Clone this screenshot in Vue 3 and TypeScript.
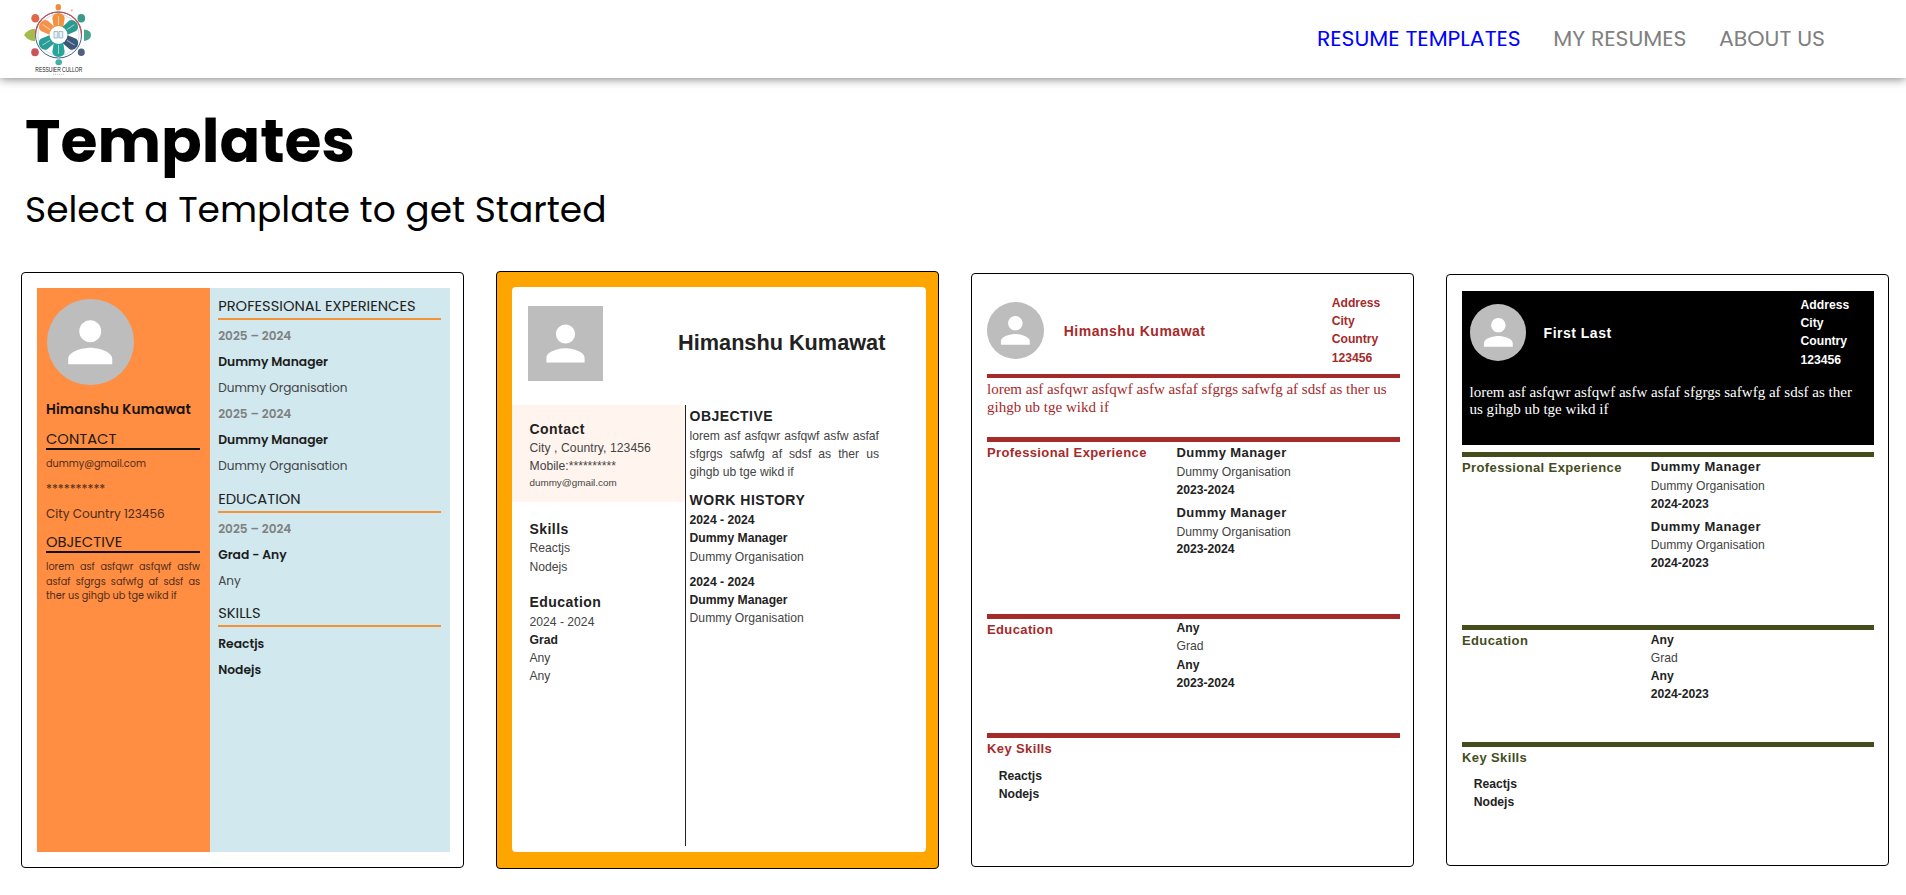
<script setup lang="ts">
interface NavItem { label: string; key: string; active: boolean }
interface Job { title: string; org: string; period: string }
interface Theme { key: string; name: string; period: string }

const navItems: NavItem[] = [
  { label: 'RESUME TEMPLATES', key: 'nav-templates', active: true },
  { label: 'MY RESUMES', key: 'nav-resumes', active: false },
  { label: 'ABOUT US', key: 'nav-about', active: false },
]
const objective = 'lorem asf asfqwr asfqwf asfw asfaf sfgrgs safwfg af sdsf as ther us gihgb ub tge wikd if'
const skills: string[] = ['Reactjs', 'Nodejs']
const address: string[] = ['Address', 'City', 'Country', '123456']
const jobs = (period: string): Job[] => [1, 2].map(() => ({ title: 'Dummy Manager', org: 'Dummy Organisation', period }))
const banded: Theme[] = [
  { key: 'crimson', name: 'Himanshu Kumawat', period: '2023-2024' },
  { key: 'olive', name: 'First Last', period: '2024-2023' },
]
const avatarBox = '-3.73 -3.73 31.46 31.46'
const personPath = 'M12 12c2.21 0 4-1.79 4-4s-1.79-4-4-4-4 1.79-4 4 1.79 4 4 4zm0 2c-2.67 0-8 1.34-8 4v2h16v-2c0-2.66-5.33-4-8-4z'
const petals: { angle: number; color: string }[] = [
  { angle: 0, color: '#f0923f' },
  { angle: 57, color: '#2b9a8f' },
  { angle: 122, color: '#3c5878' },
  { angle: 180, color: '#27a59b' },
  { angle: 238, color: '#2a9d96' },
  { angle: 303, color: '#f4934a' },
]
</script>

<template>
  <div class="page">
    <header class="topbar">
      <svg class="logo" viewBox="0 0 70 76" width="70" height="76">
        <circle cx="35.5" cy="34" r="23" fill="#fff" stroke="#3f5f80" stroke-width="1" />
        <path d="M12.500 34a23 23 0 0 1 46 0" fill="none" stroke="#c4545a" stroke-width="1.2" />
        <circle cx="35.5" cy="34" r="20.5" fill="none" stroke="#d9dde2" stroke-width="1" />
        <g v-for="p in petals" :key="p.angle" :transform="`rotate(${p.angle} 35.5 34)`">
          <path d="M31 27.500L29.300 17Q30 12.500 35.500 12Q41 12.500 41.700 17L40 27.500Z" :fill="p.color" />
          <path d="M35.500 15v9" stroke="#fff" stroke-opacity=".55" stroke-width="1" />
        </g>
        <circle cx="35.5" cy="34" r="9" fill="#fff" />
        <path d="M31 30.500h3.800v6.500h-3.800zM36 30.500h3.800v6.500h-3.800z" fill="#e6f2f4" stroke="#7fa3b0" stroke-width=".7" />
        <ellipse cx="35.3" cy="6.300" rx="2.700" ry="3.200" fill="#f08a3c" />
        <ellipse cx="12.300" cy="17.300" rx="4" ry="4.300" fill="#e2674a" />
        <ellipse cx="58.300" cy="17.300" rx="3.800" ry="4.300" fill="#3a9a8c" />
        <path d="M1 34q4-6 11-6.200v12.500Q5 40 1 34z" fill="#a3bd4c" />
        <path d="M61 28.500q7 .5 7 5.500t-7 6z" fill="#48a58d" />
        <ellipse cx="12" cy="51.300" rx="3.800" ry="4" fill="#c9545a" />
        <ellipse cx="58.300" cy="51.300" rx="3.500" ry="3.800" fill="#4c6280" />
        <ellipse cx="35.700" cy="61.300" rx="3.300" ry="3" fill="#3fb0a3" />
        <path d="M47.500 9.500l1.500-1.500 1 1.200-1.500 1.300z" fill="#f6b26b" />
        <text x="12.300" y="71" textLength="47" lengthAdjust="spacingAndGlyphs" class="logo-text">RESSUIER CULLOR</text>
        <path d="M30 73.300h12" stroke="#c4c4c4" stroke-width="1" stroke-dasharray="1.200 .8" />
      </svg>
      <nav class="nav">
        <a v-for="n in navItems" :key="n.key" :class="['nav-link', n.key, { active: n.active }]">{{ n.label }}</a>
      </nav>
    </header>

    <main>
      <h1 class="title">Templates</h1>
      <p class="subtitle">Select a Template to get Started</p>

      <div class="cards">
        <article class="card split">
          <div class="side">
            <svg class="avatar round" :viewBox="avatarBox"><path :d="personPath" /></svg>
            <p class="side-name">Himanshu Kumawat</p>
            <h3 class="side-head contact">CONTACT</h3>
            <p class="side-mail">dummy@gmail.com</p>
            <p class="side-phone">**********</p>
            <p class="side-city">City Country 123456</p>
            <h3 class="side-head objective">OBJECTIVE</h3>
            <p class="side-text">{{ objective }}</p>
          </div>
          <div class="body">
            <h3 class="body-head experiences">PROFESSIONAL EXPERIENCES</h3>
            <template v-for="i in 2" :key="i">
              <p class="row date">2025 – 2024</p>
              <p class="row strong manager">Dummy Manager</p>
              <p class="row org">Dummy Organisation</p>
            </template>
            <h3 class="body-head education">EDUCATION</h3>
            <p class="row date">2025 – 2024</p>
            <p class="row strong grad">Grad - Any</p>
            <p class="row org">Any</p>
            <h3 class="body-head">SKILLS</h3>
            <p v-for="s in skills" :key="s" class="row strong skill">{{ s }}</p>
          </div>
        </article>

        <article class="card framed">
          <div class="sheet">
            <div class="sheet-top">
              <svg class="avatar" :viewBox="avatarBox"><path :d="personPath" /></svg>
              <h2 class="sheet-name">Himanshu Kumawat</h2>
            </div>
            <div class="sheet-cols">
              <div class="sheet-left">
                <div class="contact-box">
                  <h3 class="head">Contact</h3>
                  <p class="line city">City , Country, 123456</p>
                  <p class="line phone">Mobile:**********</p>
                  <p class="line mail">dummy@gmail.com</p>
                </div>
                <div class="block">
                  <h3 class="head">Skills</h3>
                  <p v-for="s in skills" :key="s" class="line">{{ s }}</p>
                </div>
                <div class="block">
                  <h3 class="head">Education</h3>
                  <p class="line">2024 - 2024</p>
                  <p class="line b">Grad</p>
                  <p class="line">Any</p>
                  <p class="line">Any</p>
                </div>
              </div>
              <div class="sheet-right">
                <h3 class="head caps">OBJECTIVE</h3>
                <p class="line para">{{ objective }}</p>
                <h3 class="head caps history">WORK HISTORY</h3>
                <div v-for="(j, i) in jobs('2024 - 2024')" :key="i" class="history-item">
                  <p class="line b">{{ j.period }}</p>
                  <p class="line b">{{ j.title }}</p>
                  <p class="line">{{ j.org }}</p>
                </div>
              </div>
            </div>
          </div>
        </article>

        <article v-for="t in banded" :key="t.key" :class="['card', 'banded', t.key]">
          <div class="intro">
            <div class="intro-top">
              <svg class="avatar round" :viewBox="avatarBox"><path :d="personPath" /></svg>
              <h2 class="intro-name">{{ t.name }}</h2>
              <div class="address">
                <p v-for="a in address" :key="a" class="line">{{ a }}</p>
              </div>
            </div>
            <p class="summary">{{ objective }}</p>
          </div>
          <section class="band work">
            <h3 class="band-head">Professional Experience</h3>
            <div>
              <div v-for="(j, i) in jobs(t.period)" :key="i" class="job">
                <h4 class="job-title">{{ j.title }}</h4>
                <p class="line">{{ j.org }}</p>
                <p class="line b">{{ j.period }}</p>
              </div>
            </div>
          </section>
          <section class="band study">
            <h3 class="band-head">Education</h3>
            <div>
              <p class="line b">Any</p>
              <p class="line">Grad</p>
              <p class="line b">Any</p>
              <p class="line b">{{ t.period }}</p>
            </div>
          </section>
          <section class="band skills">
            <h3 class="band-head">Key Skills</h3>
            <div class="skill-list">
              <p v-for="s in skills" :key="s" class="line b">{{ s }}</p>
            </div>
          </section>
        </article>
      </div>
    </main>
  </div>
</template>

<style>
body { background: #fff; overflow: hidden; }
</style>

<style scoped>
.page { min-height: 895px; font-family: Poppins, Inter, sans-serif; color: #000; }
.page * { box-sizing: border-box; }
h1, h2, h3, h4, p { margin: 0; }

.topbar { display: flex; align-items: center; height: 78px; padding: 0 81px 0 23px; background: #fff; box-shadow: 0 0 10px 0 rgba(0, 0, 0, .6); clip-path: inset(0 0 -20px 0); }
.logo { display: block; overflow: visible; }
.logo-text { font: 8px "Liberation Sans", sans-serif; fill: #222; }
.nav { display: flex; margin-left: auto; gap: 32.500px; }
.nav-link { font-size: 22px; line-height: 30px; color: #808080; white-space: nowrap; }
.nav-link.active { color: #00f; }

.title { padding-left: 25px; margin-top: 26px; font-size: 60px; line-height: 74px; font-weight: 700; }
.subtitle { padding-left: 25px; margin-top: 7px; font-size: 36px; line-height: 50px; }

.cards { display: grid; grid-template-columns: repeat(4, 443px); gap: 32px; align-items: center; padding-left: 21px; height: 598px; margin-top: 36px; }
.card { border: 1px solid #000; border-radius: 4px; background: #fff; }
.avatar { display: block; flex: none; background: #bdbdbd; fill: #fff; }
.avatar.round { border-radius: 50%; }

.split { display: flex; height: 596px; padding: 15px 13px 15px 15px; }
.side { width: 173px; padding: 10.500px 10px 0 9px; background: #ff8d42; color: #231a14; }
.side .avatar { width: 86.500px; height: 86.500px; margin-left: 1.200px; }
.side-name { margin-top: 14.500px; font-size: 13.700px; line-height: 20px; font-weight: 600; white-space: nowrap; color: #1a1410; letter-spacing: .12px; }
.side-head { height: 20px; font-size: 14.700px; line-height: 18px; font-weight: 400; border-bottom: 2px solid #111; }
.side-head.contact { margin-top: 10.500px; }
.side-mail { margin-top: 5.500px; font-size: 9.700px; line-height: 16px; color: #4a2c1a; }
.side-phone { margin-top: 9.200px; font-size: 12.200px; line-height: 16px; color: #4a2c1a; }
.side-city { margin-top: 9.400px; font-size: 12.050px; line-height: 16px; color: #4a2c1a; white-space: nowrap; }
.side-head.objective { margin-top: 11.400px; }
.side-text { margin-top: 7px; font-size: 9.700px; line-height: 14.500px; text-align: justify; color: #4a2c1a; }

.body { flex: 1; padding: 6px 8.700px 0 8.200px; background: #d0e8ee; }
.body-head { margin: 7.500px 0 3.100px; height: 26px; font-size: 14.700px; line-height: 24px; font-weight: 400; border-bottom: 2px solid #f39237; color: #222; white-space: nowrap; }
.body-head:first-child { margin-top: 0; }
.row { font-size: 12.050px; line-height: 26px; color: #444; }
.row.date { color: #808080; font-weight: 600; }
.row.strong { color: #1c1c1c; font-weight: 600; font-size: 12.300px; }
.row.skill { padding-top: .5px; }

.framed, .banded { font-family: "Liberation Sans", Arial, sans-serif; }
.line { font-size: 12.160px; line-height: 18.200px; color: #444; white-space: nowrap; }
.line.b { font-weight: 700; color: #222; }

.framed { height: 598px; padding: 15px 12px 16px 15px; background: #ffa500; }
.sheet { display: flex; flex-direction: column; height: 100%; border-radius: 4px; background: #fff; }
.sheet-top { display: flex; align-items: center; height: 118px; padding: 0 0 6px 15.600px; }
.sheet .avatar { width: 75px; height: 75px; }
.sheet-name { margin-left: 75.500px; font-size: 21.700px; line-height: 30px; color: #222; padding-bottom: 1px; }
.sheet-cols { display: flex; height: 441px; }
.sheet-left { width: 173px; }
.sheet-right { flex: 1; border-left: 1px solid #222; padding: 1.400px 47px 0 3.600px; }
.contact-box { height: 97.300px; padding: 13.500px 0 0 17.500px; background: #fff4ee; }
.block { padding-left: 17.500px; margin-top: 16.400px; }
.head { font-size: 14px; line-height: 20px; letter-spacing: .45px; margin-bottom: .7px; color: #222; }
.city { letter-spacing: .06px; }
.phone { line-height: 18px; }
.mail { font-size: 9.850px; line-height: 16.400px; }
.line.para { white-space: normal; text-align: justify; }
.history { margin-top: 8.800px; letter-spacing: .5px; }
.history-item + .history-item { margin-top: 7.200px; }

.banded { padding: 0 13px 0 15px; }
.crimson { --accent: #a52a2a; height: 594px; }
.olive { --accent: #454d1c; height: 592px; }
.intro-top { display: flex; align-items: center; }
.banded .avatar { width: 56.700px; height: 56.700px; }
.intro-name { font-size: 14px; line-height: 20px; letter-spacing: .5px; padding-top: 2px; }
.address { margin-left: auto; }
.address .line { font-weight: 700; color: inherit; }
.summary { font-family: "Liberation Serif", "Times New Roman", serif; font-size: 15.040px; line-height: 17.650px; }
.band { display: grid; grid-template-columns: 189.500px 1fr; align-content: start; border-top: 5px solid var(--accent); }
.band-head { font-size: 13px; line-height: 20px; padding-top: .4px; letter-spacing: .38px; color: var(--accent); white-space: nowrap; }
.job-title { font-size: 13px; line-height: 20px; letter-spacing: .42px; color: #222; }
.job + .job { margin-top: 3.800px; }
.skill-list { padding-left: 11.700px; }

.crimson .intro { height: 163.300px; padding-top: 19.700px; color: var(--accent); }
.crimson .intro-top { height: 80.600px; padding-bottom: 7.300px; }
.crimson .intro-name { margin-left: 20px; }
.crimson .address { width: 68.300px; }
.crimson .summary { border-top: 4px solid var(--accent); padding-top: 2.600px; }
.crimson .band { padding-top: .6px; }
.crimson .work { height: 176.400px; }
.crimson .job .line:nth-child(2) { margin-top: .5px; }
.crimson .job .b { line-height: 17.300px; }
.crimson .study { height: 119.400px; }
.crimson .skill-list { margin-top: 7.900px; }

.olive { padding-right: 14.300px; }
.olive .intro { height: 154px; margin: 16px 0 7px; padding: 5px 7.500px 0 7.500px; background: #000; color: #fff; }
.olive .intro-top { margin-bottom: 14.900px; }
.olive .intro-name { margin-left: 17.400px; }
.olive .address { width: 65.700px; }
.olive .band { grid-template-columns: 188.700px 1fr; padding-top: .2px; }
.olive .work { height: 173.400px; }
.olive .job .line:nth-child(2) { margin-top: -.6px; }
.olive .study { height: 116.700px; }
.olive .skill-list { margin-top: 7.200px; }

.crimson .skills, .olive .skills { grid-template-columns: 1fr; }
</style>
